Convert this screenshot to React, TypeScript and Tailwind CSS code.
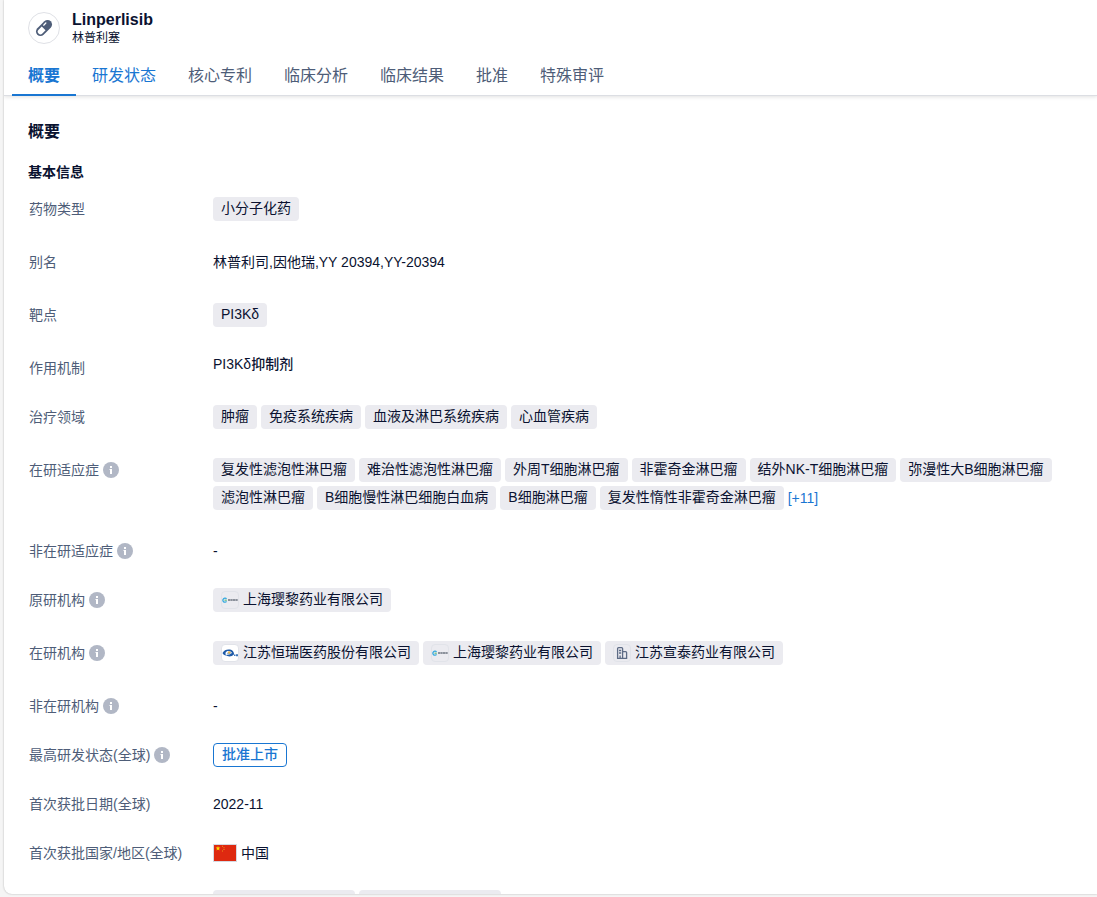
import React from "react"

type ChipType = {
  text: string,
  logo?: "yingli" | "hengrui" | "building",
}

const tabs = ["概要", "研发状态", "核心专利", "临床分析", "临床结果", "批准", "特殊审评"]

const areas: ChipType[] = [{ text: "肿瘤" }, { text: "免疫系统疾病" }, { text: "血液及淋巴系统疾病" }, { text: "心血管疾病" }]

const indications: ChipType[] = [
  { text: "复发性滤泡性淋巴瘤" },
  { text: "难治性滤泡性淋巴瘤" },
  { text: "外周T细胞淋巴瘤" },
  { text: "非霍奇金淋巴瘤" },
  { text: "结外NK-T细胞淋巴瘤" },
  { text: "弥漫性大B细胞淋巴瘤" },
  { text: "滤泡性淋巴瘤" },
  { text: "B细胞慢性淋巴细胞白血病" },
  { text: "B细胞淋巴瘤" },
  { text: "复发性惰性非霍奇金淋巴瘤" },
]

const orgs: ChipType[] = [
  { text: "江苏恒瑞医药股份有限公司", logo: "hengrui" },
  { text: "上海璎黎药业有限公司", logo: "yingli" },
  { text: "江苏宣泰药业有限公司", logo: "building" },
]

const PillIcon = () => (
  <svg width="20" height="20" viewBox="0 0 20 20" fill="none">
    <g transform="rotate(-45 10 10)">
      <rect x="0.5" y="5.5" width="19" height="9" rx="4.5" fill="#4e5d78" />
      <path d="M9.500 7.300H5a2.700 2.700 0 0 0 0 5.400h4.500z" fill="#fff" />
      <path d="M11.800 7.800h3" stroke="#fff" strokeWidth="1.300" strokeLinecap="round" />
    </g>
  </svg>
)

const InfoIcon = () => (
  <svg className="ml-1 shrink-0" width="16" height="16" viewBox="0 0 16 16">
    <circle cx="8" cy="8" r="8" fill="#b1b7c5" />
    <rect x="7" y="4" width="2" height="2" fill="#fff" />
    <path d="M6.500 7H9v5H7V8h-.5z" fill="#fff" />
  </svg>
)

const OrgLogo = ({ logo }: { logo: string }) => {
  if (logo === "hengrui") {
    return (
      <svg width="16" height="16" viewBox="0 0 16 16">
        <path d="M.5 8C2 5 5 4 8 4.500c2.500.4 3.800 2 4 4.500h-1.500C10 6.500 7 5.500 5 6.300 3.500 7 3 8.500 4 10.500 2.500 10.300 1 9.500.5 8z" fill="#1e5aa8" />
        <path d="M3.500 10c2.500 2 6 2 8.500-.5l-1.500-2.500c-1 2-3.500 3-7 3z" fill="#1e5aa8" />
        <path d="M4.800 9c.5-2 3-2.500 4.500-1.200C8.500 9.200 6.500 9.800 4.800 9z" fill="#8fb4dc" />
        <circle cx="7.200" cy="7.500" r="1.300" fill="#e2b252" />
        <path d="M12 9.500h1.500v1.500H12zM14 9.300h2v2h-2z" fill="#3f76b8" />
      </svg>
    )
  }
  if (logo === "yingli") {
    return (
      <svg width="16" height="16" viewBox="0 0 16 16">
        <path d="M4.500 7A2 2 0 1 0 4.500 9.300" fill="none" stroke="#35a9df" strokeWidth="1.300" />
        <path d="M2.500 8.200h2.300" stroke="#52b96b" strokeWidth="1" />
        <path d="M6 8h10" stroke="#8b919b" strokeWidth="2" strokeDasharray="2.200 .3" />
      </svg>
    )
  }
  return (
    <svg width="16" height="16" viewBox="0 0 16 16" fill="none" stroke="#5e6c86" strokeWidth="1.300">
      <path d="M3.600 13.400V3.600q0-1 1-1h3q1 0 1 1v9.800zM8.600 6.600h3q1 0 1 1v5.800h-4" />
      <path d="M5 5.500h2.200M5 8h2.200M6.100 13v-2.500" />
    </svg>
  )
}

const Chip = ({ text, logo }: ChipType) => (
  <span className="inline-flex h-6 rounded bg-[#ebebf0] px-2 text-sm leading-[22px] whitespace-nowrap">
    {logo && (
      <span className={`mt-[3px] mr-1 flex h-[18px] w-[18px] shrink-0 items-center justify-center rounded border border-[#e1e3e9] ${logo === "hengrui" ? "bg-white" : ""}`}>
        <OrgLogo logo={logo} />
      </span>
    )}
    {text}
  </span>
)

const Chips = ({ items, children }: { items: ChipType[], children?: React.ReactNode }) => (
  <div className="mb-1 flex flex-wrap gap-1">
    {items.map((item) => <Chip key={item.text} {...item} />)}
    {children}
  </div>
)

const Row = ({ label, info, children }: { label: string, info?: boolean, children: React.ReactNode }) => (
  <div className="flex pb-[25px] pl-px">
    <dt className="flex h-6 w-[184px] shrink-0 items-center text-sm text-[#4e5d78]">
      {label}
      {info && <InfoIcon />}
    </dt>
    <dd className="min-w-0 flex-1 text-sm leading-6">{children}</dd>
  </div>
)

const App = () => {
  return (
    <div className="flex h-screen flex-col bg-[#f5f5f5] pb-[3px] pl-1 font-['Liberation_Sans','Noto_Sans_CJK_SC',sans-serif] text-[#0a1230]">
      <div className="flex min-h-0 flex-1 flex-col overflow-hidden rounded-bl-lg bg-white shadow-[0_0_2px_rgba(0,0,0,0.3)]">
        <header className="shrink-0 border-b border-[#dcdee3] shadow-[0_1px_4px_rgba(0,0,0,0.12)]">
          <div className="flex h-14 gap-3 px-6 pt-3">
            <div className="flex h-8 w-8 items-center justify-center rounded-full border border-[#dfe1e6]">
              <PillIcon />
            </div>
            <div className="-mt-1">
              <h1 className="text-base leading-6 font-bold">Linperlisib</h1>
              <p className="text-xs leading-3">林普利塞</p>
            </div>
          </div>
          <nav className="-mb-px flex pl-2">
            {tabs.map((tab, i) => (
              <button
                key={tab}
                className={`h-10 border-b-2 px-4 pt-0.5 text-base ${i === 0 ? "border-[#1976d2] font-bold text-[#1976d2]" : i === 1 ? "border-transparent text-[#1976d2]" : "border-transparent text-[#4e5d78]"}`}
              >
                {tab}
              </button>
            ))}
          </nav>
        </header>

        <main className="min-h-0 flex-1 overflow-hidden px-6 pt-6">
          <h2 className="text-base leading-6 font-bold">概要</h2>
          <h3 className="mt-4 mb-[13px] text-sm leading-6 font-bold">基本信息</h3>
          <dl>
            <Row label="药物类型"><Chips items={[{ text: "小分子化药" }]} /></Row>
            <Row label="别名"><div className="mb-1">林普利司,因他瑞,YY 20394,YY-20394</div></Row>
            <Row label="靶点"><Chips items={[{ text: "PI3Kδ" }]} /></Row>
            <Row label="作用机制"><div className="leading-4 font-medium">PI3Kδ抑制剂</div></Row>
            <Row label="治疗领域"><Chips items={areas} /></Row>
            <Row label="在研适应症" info>
              <Chips items={indications}>
                <button className="text-sm text-[#1976d2]">[+11]</button>
              </Chips>
            </Row>
            <Row label="非在研适应症" info>-</Row>
            <Row label="原研机构" info><Chips items={[{ text: "上海璎黎药业有限公司", logo: "yingli" }]} /></Row>
            <Row label="在研机构" info><Chips items={orgs} /></Row>
            <Row label="非在研机构" info>-</Row>
            <Row label="最高研发状态(全球)" info>
              <span className="flex h-6 w-fit rounded border border-[#1976d2] px-2 leading-5 font-medium text-[#1976d2]">批准上市</span>
            </Row>
            <Row label="首次获批日期(全球)">2022-11</Row>
            <Row label="首次获批国家/地区(全球)">
              <div className="flex items-center gap-1">
                <svg width="24" height="18" viewBox="0 0 24 18">
                  <rect width="24" height="18" fill="#d5d9e2" />
                  <rect x="1" y="1" width="22" height="16" fill="#de2910" />
                  <path d="M5 2l.6 1.600h1.800L6 4.700l.5 1.700L5 5.400 3.500 6.400 4 4.700 2.600 3.600h1.800z" fill="#ffde00" />
                  <path d="M9 1.800h1v1H9zM10.500 3.200h1v1h-1zM10.500 5h1v1h-1zM9 6.500h1v1H9z" fill="#f0931a" />
                </svg>
                中国
              </div>
            </Row>
          </dl>
          {/* next row, still loading */}
          <div className="flex gap-1 pl-[185px]" aria-hidden="true">
            <span className="h-6 w-[142px] rounded bg-[#ebebf0]" />
            <span className="h-6 w-[142px] rounded bg-[#ebebf0]" />
          </div>
        </main>
      </div>
    </div>
  )
}

export default App
